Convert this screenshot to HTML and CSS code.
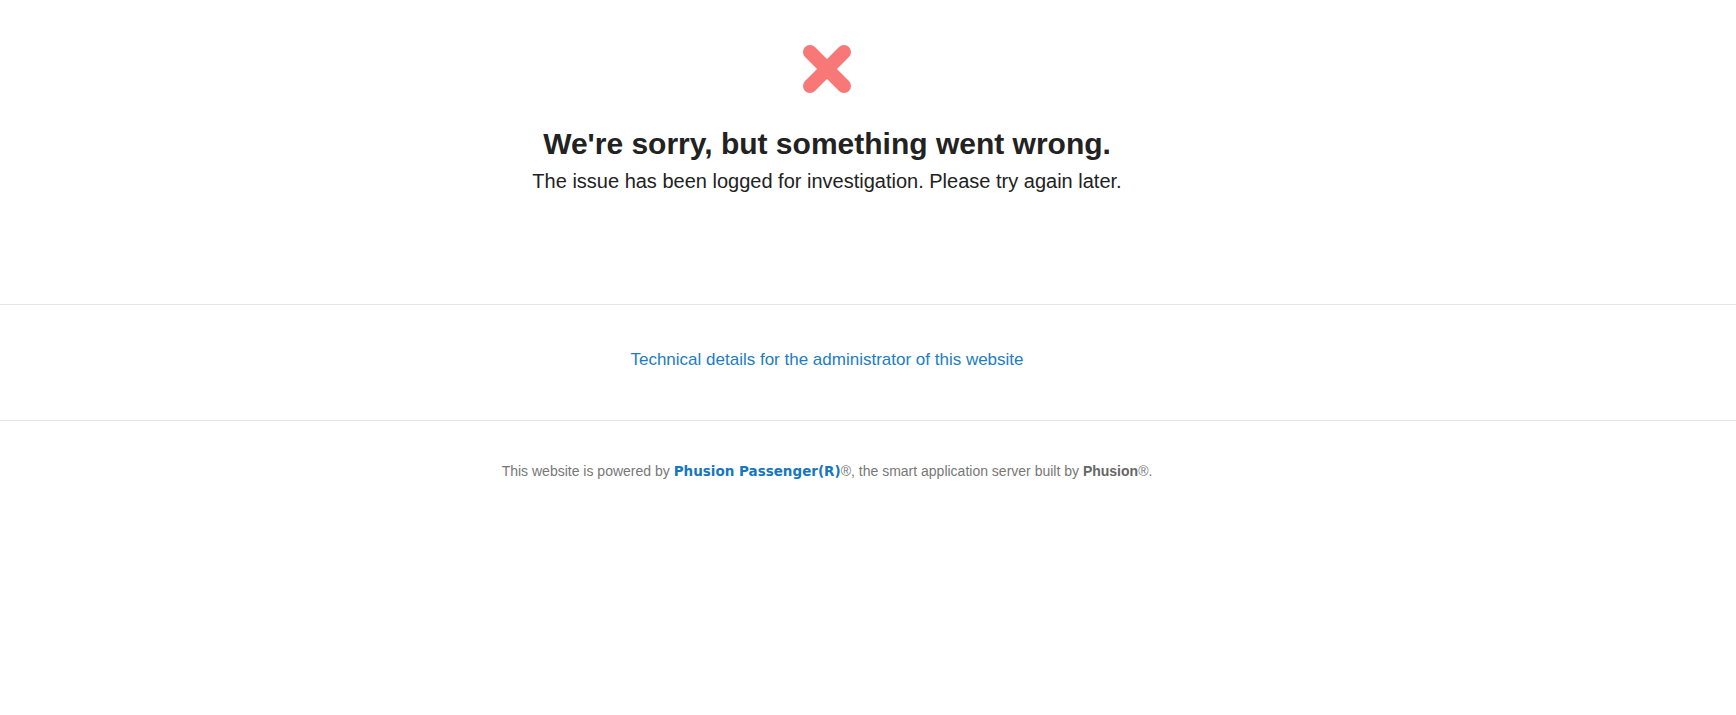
FILE: index.html
```html
<!DOCTYPE html>
<html lang="en">
<head>
    <meta charset="UTF-8">
    <meta name="viewport" content="width=device-width, initial-scale=1.0">
    <title>We're sorry, but something went wrong</title>
    <link rel="stylesheet" href="styles.css">
</head>
<body>
    <div class="error">
        <div class="container">
            <svg class="error-icon" width="50" height="50" viewBox="0 0 50 50">
                <path d="M8 8 L42 42 M42 8 L8 42" stroke="#f87777" stroke-width="14" stroke-linecap="round" fill="none"/>
            </svg>
            <h1>We're sorry, but something went wrong.</h1>
            <p class="lead">The issue has been logged for investigation. Please try again later.</p>
        </div>
    </div>

    <div class="details">
        <div class="container">
            <a href="#" class="details-link">Technical details for the administrator of this website</a>
        </div>
    </div>

    <div class="footer">
        <div class="container">
            This website is powered by <a href="#" class="passenger">Phusion Passenger(R)</a>&reg;, the smart application server built by <b>Phusion</b>&reg;.
        </div>
    </div>
</body>
</html>
```

FILE: styles.css
```css
body {
    font-family: "Liberation Sans", Arial, sans-serif;
    margin: 0;
    padding: 0;
    color: #222;
    background: #fff;
}
.container {
    text-align: center;
    padding-right: 82px;
}
.error {
    padding-top: 44px;
    padding-bottom: 111px;
    border-bottom: 1px solid #e5e5e5;
}
.error-icon {
    display: block;
    margin: 0 auto;
}
h1 {
    font-size: 30px;
    line-height: 36px;
    font-weight: bold;
    margin: 32px 0 0;
}
.lead {
    font-size: 20px;
    line-height: 24px;
    margin: 7px 0 0;
}
.details {
    padding-top: 45px;
    padding-bottom: 50px;
    border-bottom: 1px solid #e5e5e5;
}
.details-link {
    font-size: 17px;
    line-height: 20px;
    color: #1b7dc3;
    text-decoration: none;
}
.footer {
    padding-top: 41px;
    font-size: 14px;
    line-height: 18px;
    color: #777;
}
.footer b {
    color: #666;
}
.passenger {
    font-family: "DejaVu Sans", sans-serif;
    font-weight: bold;
    font-size: 13.5px;
    color: #1677c0;
    text-decoration: none;
}
```
